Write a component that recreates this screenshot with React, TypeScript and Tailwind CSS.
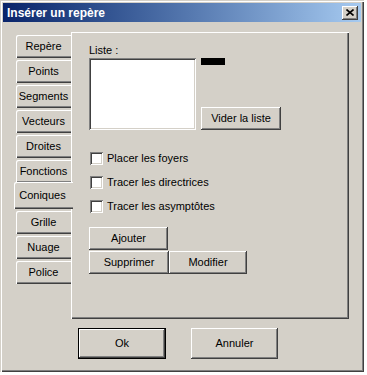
import React from 'react';

const raised =
  'bg-[#d4d0c8] shadow-[inset_-1px_-1px_#404040,inset_1px_1px_#ffffff,inset_-2px_-2px_#808080]';
const sunken =
  'shadow-[inset_1px_1px_#808080,inset_-1px_-1px_#ffffff,inset_2px_2px_#404040,inset_-2px_-2px_#d4d0c8]';

const tabs = [
  'Repère',
  'Points',
  'Segments',
  'Vecteurs',
  'Droites',
  'Fonctions',
  'Coniques',
  'Grille',
  'Nuage',
  'Police',
];

function Button({ label, className }: { label: string; className: string }) {
  return (
    <div className={`${raised} ${className} flex items-center justify-center text-[11px] text-black`}>
      {label}
    </div>
  );
}

function Check({ label }: { label: string }) {
  return (
    <div className="flex h-[13px] items-center gap-[4px] pl-px">
      <div className={`h-[13px] w-[13px] bg-white ${sunken}`} />
      <span className="text-[11px] leading-[13px] text-black">{label}</span>
    </div>
  );
}

function Tab({ label, active }: { label: string; active: boolean }) {
  if (active) {
    return (
      <div className="relative z-10 -mr-[2px] -mt-px ml-[14px] flex h-[27px] w-[59px] items-center justify-center rounded-tl-[2px] bg-[#d4d0c8] pr-[2px] text-[11px] text-black shadow-[inset_1px_1px_#ffffff,inset_0_-1px_#404040,inset_0_-2px_#808080]">
        {label}
      </div>
    );
  }
  return (
    <div className="ml-[16px] mt-[2px] flex h-[23px] w-[55px] items-center justify-center rounded-tl-[2px] bg-[#d4d0c8] pb-px text-[11px] text-black shadow-[inset_1px_1px_#ffffff,inset_0_-1px_#404040,inset_0_-2px_#808080]">
      {label}
    </div>
  );
}

export default function App() {
  return (
    <div className="h-[375px] w-[367px] bg-white font-['Liberation_Sans',Arial,sans-serif]">
      <div className="flex h-[372px] w-[364px] flex-col bg-[#d4d0c8] shadow-[inset_1px_1px_#d4d0c8,inset_2px_2px_#ffffff,inset_-1px_-1px_#404040,inset_-2px_-2px_#808080]">
        {/* title bar */}
        <div className="mx-[3px] mt-[3px] flex h-[19px] items-center bg-gradient-to-r from-[#0a246a] to-[#a6caf0] pl-[4px] pr-[3px]">
          <span className="flex-1 text-[12px] font-bold text-white">Insérer un repère</span>
          <div className={`${raised} flex h-[14px] w-[16px] items-center justify-center`}>
            <svg width="8" height="7" viewBox="0 0 8 7">
              <path d="M0.5 0.5 L7.5 6.5 M7.5 0.5 L0.5 6.5" stroke="#000" strokeWidth="1.6" />
            </svg>
          </div>
        </div>

        {/* body */}
        <div className="mt-[10px] flex">
          <div className="mt-[1px] flex flex-col">
            {tabs.map((t) => (
              <Tab key={t} label={t} active={t === 'Coniques'} />
            ))}
          </div>
          <div className="flex h-[287px] w-[278px] flex-col bg-[#d4d0c8] pl-[18px] pt-[12px] shadow-[inset_1px_1px_#ffffff,inset_-1px_-1px_#404040,inset_-2px_-2px_#808080]">
            <div className="h-[14px] text-[11px] leading-[12px] text-black">Liste :</div>
            <div className="flex">
              <div className={`h-[72px] w-[107px] bg-white ${sunken}`} />
              <div className="ml-[5px] flex flex-col justify-between">
                <div className="h-[7px] w-[24px] bg-black" />
                <Button label="Vider la liste" className="h-[23px] w-[80px]" />
              </div>
            </div>
            <div className="mt-[22px] flex flex-col gap-[11px]">
              <Check label="Placer les foyers" />
              <Check label="Tracer les directrices" />
              <Check label="Tracer les asymptôtes" />
            </div>
            <div className="mt-[14px] flex flex-col gap-px">
              <Button label="Ajouter" className="h-[23px] w-[79px]" />
              <div className="flex">
                <Button label="Supprimer" className="h-[23px] w-[80px]" />
                <Button label="Modifier" className="h-[23px] w-[78px]" />
              </div>
            </div>
          </div>
        </div>

        {/* footer buttons */}
        <div className="mt-[9px] flex gap-[25px] pl-[78px]">
          <div className="border border-black">
            <Button label="Ok" className="h-[29px] w-[86px]" />
          </div>
          <Button label="Annuler" className="h-[31px] w-[87px]" />
        </div>
      </div>
    </div>
  );
}
